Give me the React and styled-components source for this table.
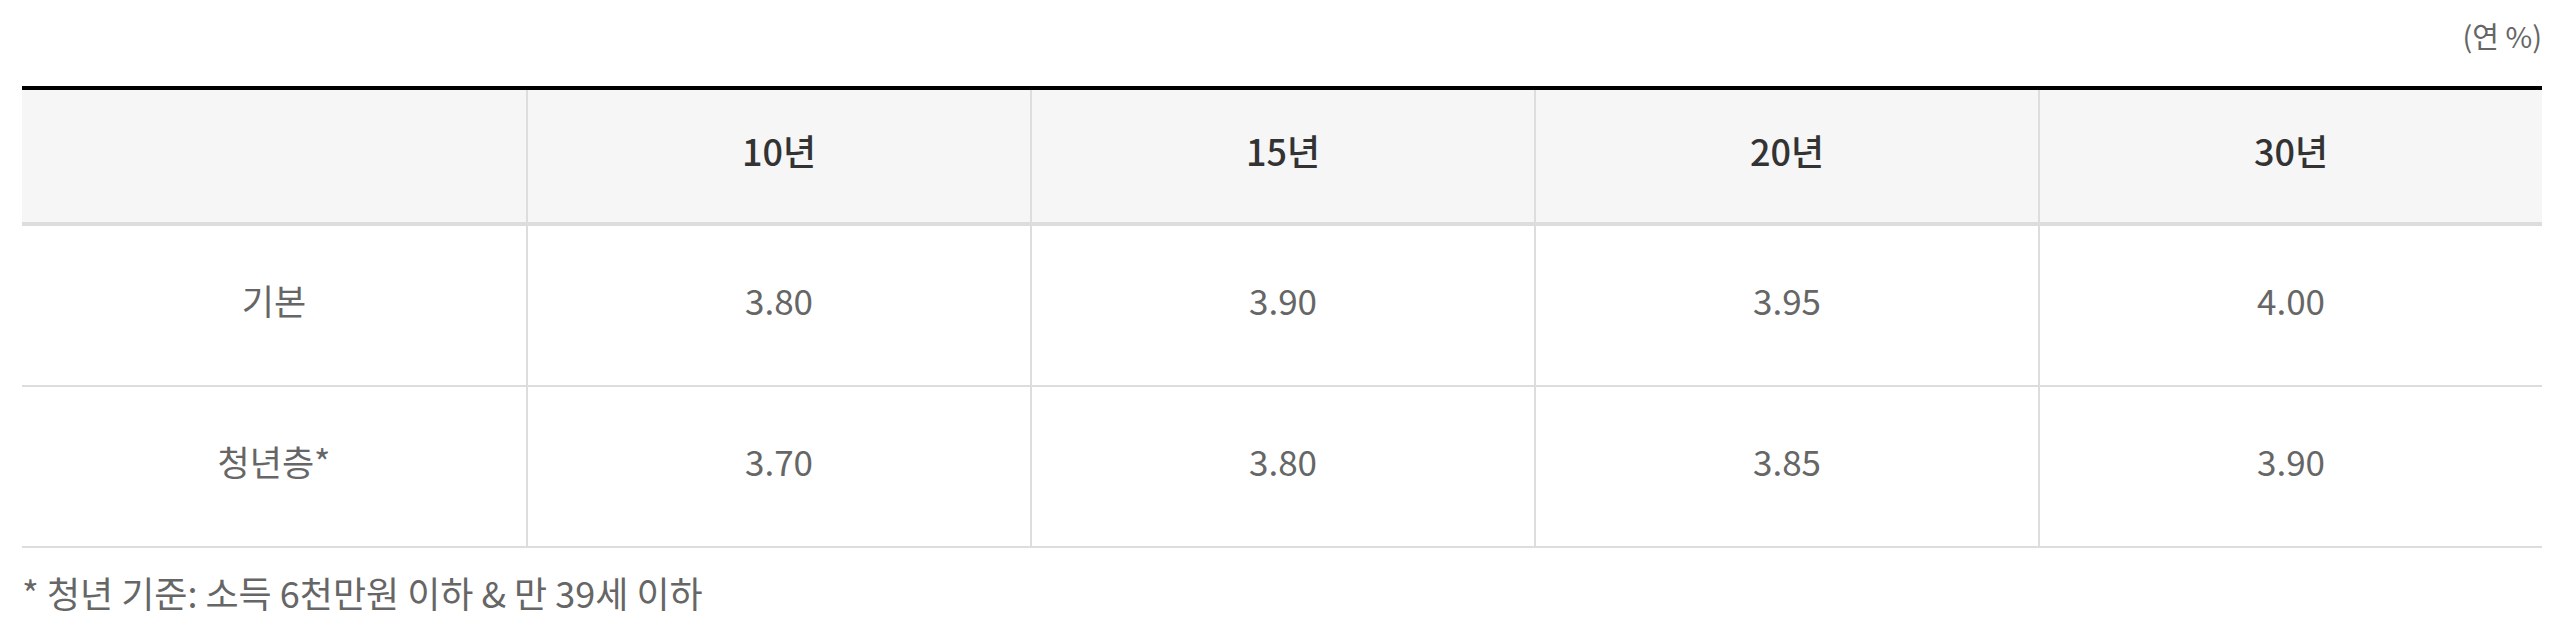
import React from "react";
import styled, { createGlobalStyle } from "styled-components";

const GlobalStyle = createGlobalStyle`
  html, body {
    margin: 0;
    padding: 0;
    background: #fff;
  }
  body {
    font-family: "Noto Sans CJK KR", "Noto Sans", sans-serif;
  }
`;

const Wrap = styled.div`
  padding: 0 16px 0 22px;
`;

const Unit = styled.div`
  display: flex;
  justify-content: flex-end;
  padding-top: 13px;
  margin-bottom: 28px;
  font-size: 29px;
  line-height: 45px;
  color: #666;
`;

const Table = styled.div`
  border-top: 4px solid #000;
`;

const Row = styled.div`
  display: grid;
  grid-template-columns: repeat(5, 1fr);
  height: ${(p) => (p.head ? "132px" : "159px")};
  background: ${(p) => (p.head ? "#f6f6f6" : "#fff")};
  border-bottom: ${(p) => (p.head ? "4px" : "2px")} solid #ddd;
`;

const Cell = styled.div`
  display: flex;
  align-items: center;
  justify-content: center;
  padding-bottom: 12px;
  font-size: ${(p) => (p.head ? "36px" : "35px")};
  font-weight: ${(p) => (p.head ? 500 : 400)};
  color: ${(p) => (p.head ? "#333" : "#666")};

  & + & {
    border-left: 2px solid #ddd;
  }
`;

const Note = styled.p`
  margin: 17px 0 0;
  font-size: 36px;
  line-height: 54px;
  color: #666;
`;

const terms = ["10년", "15년", "20년", "30년"];

const rates = [
  { label: "기본", values: ["3.80", "3.90", "3.95", "4.00"] },
  { label: "청년층*", values: ["3.70", "3.80", "3.85", "3.90"] },
];

export default function App() {
  return (
    <Wrap>
      <GlobalStyle />
      <Unit>(연 %)</Unit>
      <Table>
        <Row head>
          <Cell head />
          {terms.map((t) => (
            <Cell head key={t}>
              {t}
            </Cell>
          ))}
        </Row>
        {rates.map((r) => (
          <Row key={r.label}>
            <Cell>{r.label}</Cell>
            {r.values.map((v, i) => (
              <Cell key={i}>{v}</Cell>
            ))}
          </Row>
        ))}
      </Table>
      <Note>* 청년 기준: 소득 6천만원 이하 &amp; 만 39세 이하</Note>
    </Wrap>
  );
}
